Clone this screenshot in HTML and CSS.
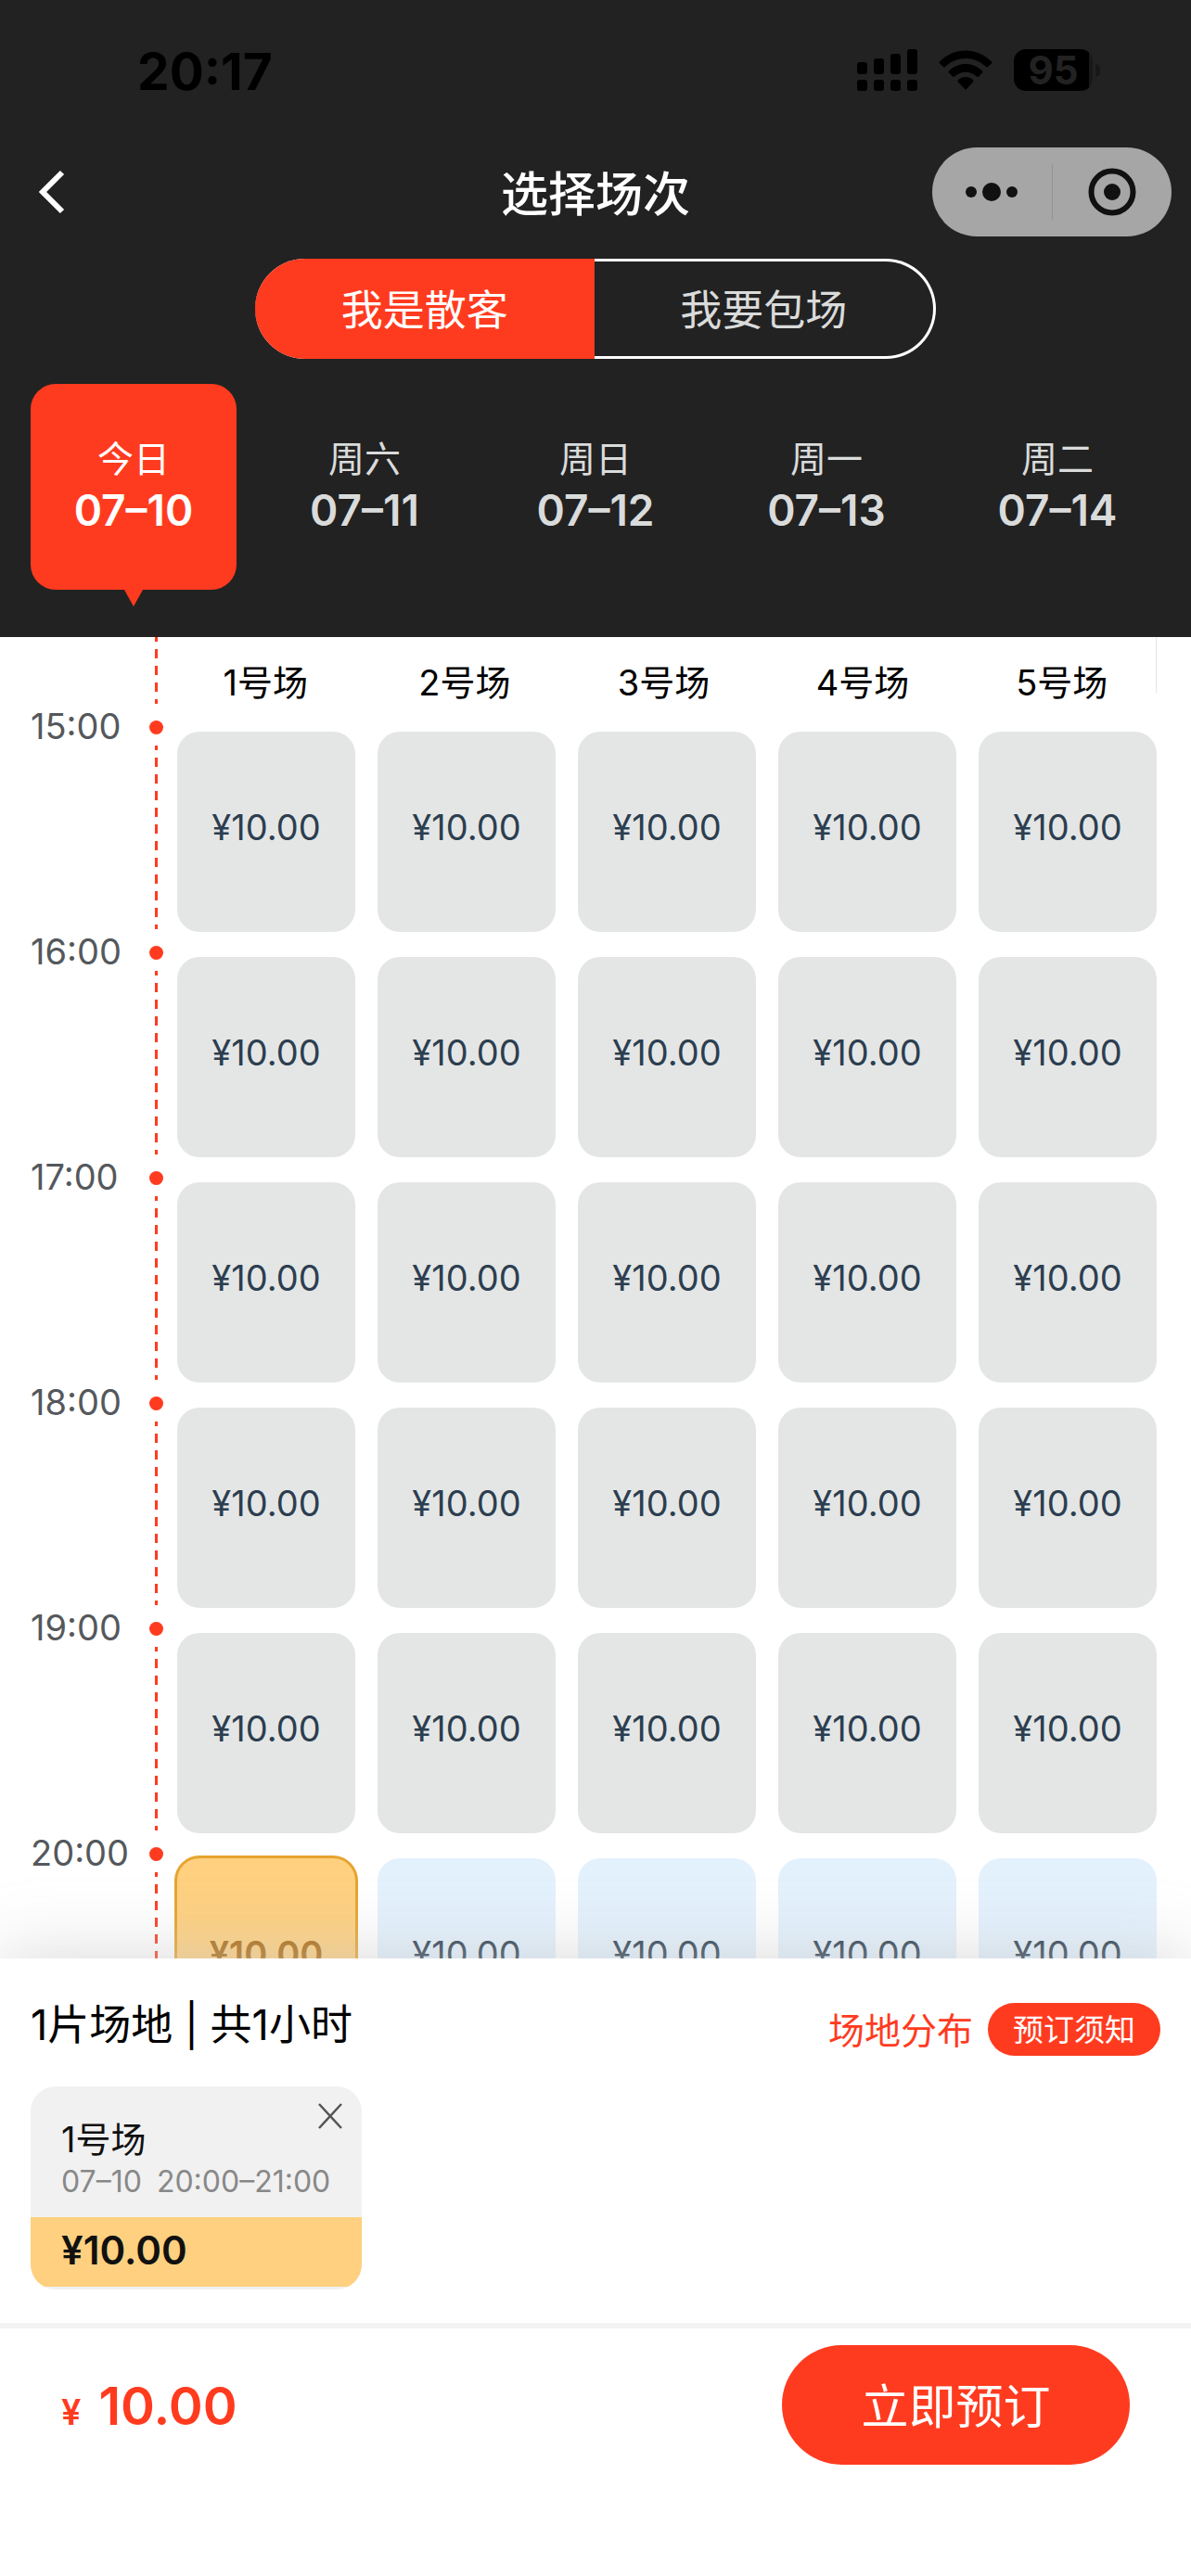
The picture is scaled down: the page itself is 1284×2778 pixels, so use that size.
FILE: index.html
```html
<!DOCTYPE html>
<html lang="zh-CN">
<head>
  <meta charset="UTF-8">
  <meta name="viewport" content="width=device-width, initial-scale=1.0">
  <title>选择场次</title>
  <link rel="stylesheet" href="styles.css">
</head>
<body>
  <header class="header">
    <div class="status-bar">
      <span class="clock">20:17</span>
      <div class="status-icons">
        <svg class="signal" width="65" height="45" viewBox="0 0 65 45">
          <rect x="0" y="14" width="11" height="13" rx="3"/>
          <rect x="18" y="10" width="11" height="17" rx="3"/>
          <rect x="36" y="5" width="11" height="22" rx="3"/>
          <rect x="54" y="0" width="11" height="27" rx="3"/>
          <rect x="0" y="33" width="11" height="12" rx="3"/>
          <rect x="18" y="33" width="11" height="12" rx="3"/>
          <rect x="36" y="33" width="11" height="12" rx="3"/>
          <rect x="54" y="33" width="11" height="12" rx="3"/>
        </svg>
        <svg class="wifi" width="58" height="45" viewBox="0 0 58 45">
          <path d="M1 13.500C17-2.500 41-2.500 57 13.500Q58 14.500 57 15.500L53 19Q52 20 51 19C38.500 7 19.500 7 7 19Q6 20 5 19L1 15.500Q0 14.500 1 13.500Z"/>
          <path d="M11 23.500C21 13.500 37 13.500 47 23.500Q48 24.500 47 25.500L43 29.500Q42 30.500 41 29.500C34 23 24 23 17 29.500Q16 30.500 15 29.500L11 25.500Q10 24.500 11 23.500Z"/>
          <path d="M21 33C25.500 29 32.500 29 37 33Q38 34 37 35.500L30 43Q29 44 28 43L21 35.500Q20 34 21 33Z"/>
        </svg>
        <div class="battery">
          <span class="battery-level">95</span>
          <span class="battery-cap"></span>
        </div>
      </div>
    </div>

    <div class="nav-bar">
      <button class="back" aria-label="返回">
        <svg width="30" height="48" viewBox="0 0 30 48" fill="none" stroke="#fff" stroke-width="6">
          <path d="M26 3L5 24L26 45"/>
        </svg>
      </button>
      <h1>选择场次</h1>
      <div class="capsule">
        <button aria-label="更多">
          <svg width="58" height="24" viewBox="0 0 58 24">
            <circle cx="7" cy="12" r="6"/>
            <circle cx="29" cy="12" r="10"/>
            <circle cx="51" cy="12" r="6"/>
          </svg>
        </button>
        <button aria-label="关闭">
          <svg width="52" height="52" viewBox="0 0 52 52">
            <circle cx="26" cy="26" r="22.500" fill="none" stroke="#111" stroke-width="6"/>
            <circle cx="26" cy="26" r="9"/>
          </svg>
        </button>
      </div>
    </div>

    <div class="tabs">
      <button class="tab active">我是散客</button>
      <button class="tab">我要包场</button>
    </div>

    <div class="dates">
      <button class="date active"><span>今日</span><strong>07–10</strong></button>
      <button class="date"><span>周六</span><strong>07–11</strong></button>
      <button class="date"><span>周日</span><strong>07–12</strong></button>
      <button class="date"><span>周一</span><strong>07–13</strong></button>
      <button class="date"><span>周二</span><strong>07–14</strong></button>
    </div>
  </header>

  <main class="schedule">
    <ul class="times">
      <li class="lead"><i class="line"></i></li>
      <li><span>15:00</span><i class="dot"></i><i class="line"></i></li>
      <li><span>16:00</span><i class="dot"></i><i class="line"></i></li>
      <li><span>17:00</span><i class="dot"></i><i class="line"></i></li>
      <li><span>18:00</span><i class="dot"></i><i class="line"></i></li>
      <li><span>19:00</span><i class="dot"></i><i class="line"></i></li>
      <li><span>20:00</span><i class="dot"></i><i class="line"></i></li>
    </ul>

    <div class="courts">
      <div class="court-names">
        <span>1号场</span>
        <span>2号场</span>
        <span>3号场</span>
        <span>4号场</span>
        <span>5号场</span>
      </div>
      <div class="slots">
        <!-- 15:00 -->
        <button class="slot">¥10.00</button>
        <button class="slot">¥10.00</button>
        <button class="slot">¥10.00</button>
        <button class="slot">¥10.00</button>
        <button class="slot">¥10.00</button>
        <!-- 16:00 -->
        <button class="slot">¥10.00</button>
        <button class="slot">¥10.00</button>
        <button class="slot">¥10.00</button>
        <button class="slot">¥10.00</button>
        <button class="slot">¥10.00</button>
        <!-- 17:00 -->
        <button class="slot">¥10.00</button>
        <button class="slot">¥10.00</button>
        <button class="slot">¥10.00</button>
        <button class="slot">¥10.00</button>
        <button class="slot">¥10.00</button>
        <!-- 18:00 -->
        <button class="slot">¥10.00</button>
        <button class="slot">¥10.00</button>
        <button class="slot">¥10.00</button>
        <button class="slot">¥10.00</button>
        <button class="slot">¥10.00</button>
        <!-- 19:00 -->
        <button class="slot">¥10.00</button>
        <button class="slot">¥10.00</button>
        <button class="slot">¥10.00</button>
        <button class="slot">¥10.00</button>
        <button class="slot">¥10.00</button>
        <!-- 20:00 -->
        <button class="slot selected">¥10.00</button>
        <button class="slot open">¥10.00</button>
        <button class="slot open">¥10.00</button>
        <button class="slot open">¥10.00</button>
        <button class="slot open">¥10.00</button>
      </div>
    </div>
  </main>

  <section class="summary">
    <div class="summary-head">
      <h2>1片场地 | 共1小时</h2>
      <a class="map-link" href="#">场地分布</a>
      <button class="notice">预订须知</button>
    </div>
    <div class="ticket">
      <button class="remove" aria-label="移除">
        <svg width="26" height="28" viewBox="0 0 26 28" fill="none" stroke="#555" stroke-width="2.500">
          <path d="M1 1L25 27M25 1L1 27"/>
        </svg>
      </button>
      <h3>1号场</h3>
      <p class="ticket-time"><span>07–10</span><span>20:00–21:00</span></p>
      <p class="ticket-price">¥10.00</p>
    </div>
  </section>

  <footer class="checkout">
    <p class="total"><small>¥</small>10.00</p>
    <button class="book">立即预订</button>
  </footer>
</body>
</html>
```
FILE: styles.css
```css
* {
  margin: 0;
  padding: 0;
  box-sizing: border-box;
}
body {
  display: flex;
  flex-direction: column;
  height: 100vh;
  background: #fff;
  color: #000;
  font-family: Inter, "Noto Sans CJK SC", sans-serif;
}
button {
  border: none;
  background: none;
  color: inherit;
  font-family: inherit;
  cursor: pointer;
}
svg {
  display: block;
}

/* Header */
.header {
  padding-bottom: 51px;
  background: #222;
  color: #fff;
}
.status-bar {
  display: flex;
  justify-content: space-between;
  align-items: center;
  height: 151px;
  padding: 0 98px 0 148px;
  color: #000;
}
.clock {
  padding-top: 2px;
  font-size: 55px;
  font-weight: 700;
}
.status-icons {
  display: flex;
  align-items: center;
  gap: 23px;
}
.battery {
  display: flex;
  align-items: center;
  gap: 3px;
}
.battery-level {
  width: 85px;
  height: 45px;
  border-radius: 13px;
  background: linear-gradient(to right, #000 81px, #181818 81px);
  color: #222;
  font-size: 42px;
  font-weight: 700;
  line-height: 45px;
  text-align: center;
}
.battery-cap {
  width: 5px;
  height: 14px;
  border-radius: 0 5px 5px 0;
  background: #181818;
}
.nav-bar {
  display: grid;
  grid-template-columns: 1fr auto 1fr;
  align-items: center;
  height: 112px;
  padding: 0 21px;
}
.back {
  justify-self: start;
  padding: 0 20px;
}
.nav-bar h1 {
  padding-bottom: 2px;
  font-size: 51px;
  font-weight: 500;
}
.capsule {
  display: flex;
  justify-self: end;
  align-items: center;
  width: 258px;
  height: 96px;
  border-radius: 48px;
  background: #a6a6a6;
  fill: #111;
}
.capsule button {
  display: flex;
  flex: 1;
  justify-content: center;
  align-items: center;
  height: 60px;
}
.capsule button + button {
  border-left: 1px solid #929292;
}
.tabs {
  display: flex;
  width: 734px;
  height: 108px;
  margin: 16px auto 27px;
  border: 3px solid #fff;
  border-left: none;
  border-radius: 54px;
  background: #222;
}
.tab {
  flex: 1;
  padding-bottom: 4px;
  color: #dadbdb;
  font-size: 45px;
}
.tab.active {
  margin: -3px 0;
  border-radius: 54px 0 0 54px;
  background: #ff3b1f;
  color: #fff;
}
.dates {
  display: grid;
  grid-template-columns: repeat(5, 1fr);
  gap: 27px;
  padding: 0 33px;
}
.date {
  position: relative;
  display: flex;
  flex-direction: column;
  justify-content: center;
  align-items: center;
  height: 222px;
  padding-bottom: 4px;
  border-radius: 27px;
  color: #dadbdb;
}
.date span {
  font-size: 39px;
  line-height: 54px;
}
.date strong {
  font-size: 46px;
  font-weight: 600;
  line-height: 56px;
}
.date.active {
  background: #ff3b1f;
  color: #fff;
}
.date.active::after {
  content: "";
  position: absolute;
  top: 100%;
  left: 50%;
  margin-left: -10px;
  border: 10px solid transparent;
  border-top: 18px solid #ff3b1f;
  border-bottom: 0;
}

/* Schedule */
.schedule {
  display: flex;
  flex: 1;
  min-height: 0;
  padding-right: 37px;
  overflow: hidden;
}
.times {
  width: 191px;
  padding: 0 15px 0 33px;
  list-style: none;
}
.times li {
  display: grid;
  grid-template-columns: 1fr 15px;
  grid-template-rows: 45px 198px;
  justify-items: center;
}
.times .lead {
  grid-template-rows: 72px;
}
.times span {
  justify-self: start;
  padding-top: 2px;
  color: #54585c;
  font-size: 38px;
  line-height: 45px;
}
.dot {
  width: 15px;
  height: 15px;
  margin-top: 18px;
  border-radius: 50%;
  background: #ff3b1f;
}
.line {
  grid-column: 2;
  width: 3px;
  background: repeating-linear-gradient(#ff3b1f 0 5px, transparent 5px 13px, #ff3b1f 13px 18px);
}
.courts {
  flex: 1;
}
.court-names {
  display: grid;
  grid-template-columns: repeat(5, 1fr);
  gap: 24px;
  height: 60px;
  margin-bottom: 42px;
  padding-right: 6px;
  border-right: 1px solid #e5e5e5;
  font-size: 38px;
  line-height: 99px;
  text-align: center;
}
.slots {
  display: grid;
  grid-template-columns: repeat(5, 1fr);
  grid-auto-rows: 216px;
  gap: 27px 24px;
}
.slot {
  padding-bottom: 10px;
  border-radius: 24px;
  background: #e4e6e5;
  color: #2c3e50;
  font-size: 38px;
}
.slot.open {
  background: #e3f1fd;
}
.slot.selected {
  background: #fed07f;
  box-shadow: 0 0 0 3px #e6a42f;
  color: #ad6c10;
  font-weight: 600;
}

/* Picked slots */
.summary {
  position: relative;
  padding: 48px 33px 36px;
  background: #fff;
  box-shadow: 0 0 72px rgba(200, 200, 200, 0.7);
}
.summary-head {
  display: flex;
  align-items: center;
  height: 57px;
  margin-bottom: 33px;
}
.summary-head h2 {
  flex: 1;
  padding-bottom: 16px;
  font-size: 45px;
  font-weight: 400;
}
.map-link {
  margin-right: 16px;
  padding-bottom: 4px;
  color: #ff3b1f;
  font-size: 39px;
  text-decoration: none;
}
.notice {
  width: 186px;
  height: 57px;
  padding-bottom: 4px;
  border-radius: 29px;
  background: #ff3b1f;
  color: #fff;
  font-size: 33px;
}
.ticket {
  position: relative;
  width: 357px;
  padding: 32px 0 3px;
  overflow: hidden;
  border-radius: 27px;
  background: #f1f1f1;
  color: #111;
}
.remove {
  position: absolute;
  top: 18px;
  right: 21px;
}
.ticket h3 {
  padding: 0 33px;
  font-size: 38px;
  font-weight: 400;
  line-height: 51px;
}
.ticket-time {
  display: flex;
  gap: 16px;
  padding: 0 33px 18px;
  color: #888;
  font-size: 32px;
  line-height: 40px;
  white-space: nowrap;
}
.ticket-price {
  padding: 0 33px;
  background: #fed07f;
  font-size: 42px;
  font-weight: 600;
  line-height: 72px;
  padding-bottom: 3px;
}

/* Bottom bar */
.checkout {
  position: relative;
  display: flex;
  justify-content: space-between;
  align-items: center;
  padding: 18px 66px 120px;
  border-top: 6px solid #f3f3f3;
  background: #fff;
}
.total {
  padding-top: 2px;
  color: #ff3b1f;
  font-size: 56px;
  font-weight: 600;
}
.total small {
  margin-right: 19px;
  font-size: 38px;
}
.book {
  width: 375px;
  height: 129px;
  padding-bottom: 4px;
  border-radius: 65px;
  background: #ff3b1f;
  color: #fff;
  font-size: 51px;
}
```
